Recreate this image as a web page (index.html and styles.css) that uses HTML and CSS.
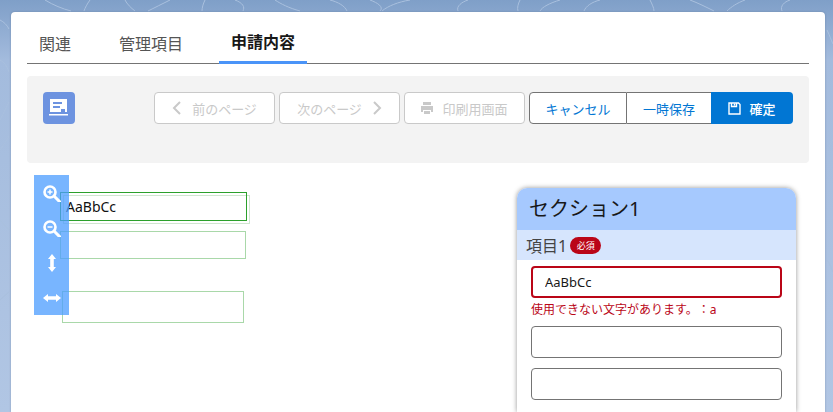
FILE: index.html
```html
<!DOCTYPE html>
<html lang="ja">
<head>
<meta charset="utf-8">
<title>申請内容</title>
<link rel="stylesheet" href="styles.css">
</head>
<body>
<svg class="backdrop" width="833" height="412" viewBox="0 0 833 412" fill="none" stroke="#a9c0de" stroke-width="1" aria-hidden="true">
  <path d="M45 0c8 5 18 9 26 11M90 0c-3 4-5 8-6 11M125 0c2 4 6 8 10 11M170 0c-8 4-16 8-22 11M205 0c-2 4-3 8-3 11M235 0c8 3 10 7 8 11M275 0c6 4 14 8 25 11M330 0c8 2 15 6 17 11M370 0c8 3 14 7 10 11M410 0c-12 2-22 6-28 11M468 0c-6 2-12 6-10 11M520 0c-2 4-3 8-2 11M560 0c-10 3-18 7-20 11M600 0c-8 2-14 6-16 11M650 0c2 4 4 8 4 11M690 0c8 3 16 7 24 11M745 0c-8 3-14 7-18 11M790 0c-6 2-10 6-8 11"/>
  <path d="M0 20c4 2 7 5 9 9M0 60c4 2 7 6 9 12M0 120c4-8 7-14 9-18M0 150c4-6 7-10 9-14M0 220c4 4 7 8 9 10M0 300c4-4 7-6 9-8M827 30c3 6 4 10 6 14M827 150c3-4 4-8 6-10M827 260c3 4 4 8 6 12"/>
</svg>
<main class="card">
  <nav class="tabs">
    <a class="tab">関連</a>
    <a class="tab">管理項目</a>
    <a class="tab tab-active">申請内容</a>
  </nav>
  <section class="actions">
    <span class="app-icon">
      <svg width="20" height="18" viewBox="0 0 20 18"><rect x="1" y="0" width="17" height="13" fill="#fff"/><rect x="4" y="3" width="9" height="2" fill="#6d93e0"/><rect x="4" y="7" width="7" height="2" fill="#6d93e0"/><rect x="12" y="10" width="4" height="3" fill="#6d93e0"/><rect x="0" y="15" width="19" height="1.5" fill="#fff"/></svg>
    </span>
    <div class="action-buttons">
      <button class="btn btn-disabled">
        <svg class="glyph" width="10" height="14" viewBox="0 0 10 14" fill="none" stroke="#c9c9c9" stroke-width="2"><path d="M8 1 2 7l6 6"/></svg>
        前のページ
      </button>
      <button class="btn btn-disabled">
        次のページ
        <svg class="glyph" width="10" height="14" viewBox="0 0 10 14" fill="none" stroke="#c9c9c9" stroke-width="2"><path d="m2 1 6 6-6 6"/></svg>
      </button>
      <button class="btn btn-disabled btn-print">
        <svg class="glyph" width="14" height="14" viewBox="0 0 14 14" fill="#c9c9c9"><rect x="3" y="1" width="8" height="3"/><path d="M1 5h12v6h-2V9H3v2H1z"/><rect x="4" y="10" width="6" height="3"/></svg>
        印刷用画面
      </button>
      <div class="btn-group">
        <button class="btn-seg btn-cancel">キャンセル</button>
        <button class="btn-seg btn-temp">一時保存</button>
        <button class="btn-seg btn-confirm">
          <svg width="13" height="13" viewBox="0 0 13 13" fill="none" stroke="#fff" stroke-width="1.4"><path d="M1 1h9.500L12 2.500V12H1z"/><path d="M3.500 1v3.500h5V1M6.500 1.500v2"/></svg>
          確定
        </button>
      </div>
    </div>
  </section>
  <div class="workspace">
    <div class="canvas">
      <div class="zoom-tools">
        <svg width="18" height="18" viewBox="0 0 18 18" fill="none" stroke="#fff"><circle cx="7" cy="8" r="5.500" stroke-width="2.600"/><path d="M11.500 12.500l5 5" stroke-width="3" stroke-linecap="round"/><path d="M4.500 8h5M7 5.500v5" stroke-width="1.500"/></svg>
        <svg width="18" height="18" viewBox="0 0 18 18" fill="none" stroke="#fff"><circle cx="7" cy="8" r="5.500" stroke-width="2.600"/><path d="M11.500 12.500l5 5" stroke-width="3" stroke-linecap="round"/><path d="M4.500 8h5" stroke-width="1.500"/></svg>
        <svg width="18" height="18" viewBox="0 0 18 18" fill="#fff"><path d="M9 0l4 5h-2.200v8H13l-4 5-4-5h2.200V5H5z"/></svg>
        <svg width="18" height="18" viewBox="0 0 18 18" fill="#fff"><path d="M0 9l5-4v2.200h8V5l5 4-5 4v-2.200H5V13z"/></svg>
      </div>
      <div class="field-box field-echo"></div>
      <div class="field-box field-main">AaBbCc</div>
      <div class="field-box field-second"></div>
      <div class="field-box field-third"></div>
    </div>
    <section class="form-section">
      <h2 class="section-title">セクション1</h2>
      <div class="item-label">項目1 <span class="required">必須</span></div>
      <div class="item-body">
        <input class="text-input text-input-error" value="AaBbCc">
        <p class="error-text">使用できない文字があります。：a</p>
        <input class="text-input">
        <input class="text-input">
      </div>
    </section>
  </div>
</main>
</body>
</html>
```
FILE: styles.css
```css
* { box-sizing: border-box; }
html, body { height: 412px; overflow: hidden; }
body {
  margin: 0;
  padding: 12px 8px 0 11px;
  background: linear-gradient(180deg, #7f9fc8 0, #a3bbdd 60px, #b1c6e4 412px);
  font-family: "Noto Sans", "Noto Sans CJK JP", sans-serif;
  color: #181818;
}
.backdrop { position: absolute; left: 0; top: 0; }
.card {
  position: relative;
  width: 814px;
  height: 400px;
  padding: 0 16px;
  background: #fff;
  border-radius: 4px 4px 0 0;
  box-shadow: 0 0 2px rgba(80, 100, 130, .5);
}
.tabs {
  display: flex;
  gap: 24px;
  height: 52px;
  border-bottom: 1px solid #747474;
}
.tab {
  display: flex;
  align-items: center;
  justify-content: center;
  height: 51px;
  padding: 10px 12px 0;
  font-size: 16px;
  color: #555;
}
.tab-active { font-weight: 700; color: #181818; padding-bottom: 2px; height: 52px; border-bottom: 3px solid #4a94f8; }
.actions {
  display: flex;
  justify-content: space-between;
  height: 87px;
  margin-top: 12px;
  padding: 16px 16px 0;
  background: #f3f3f3;
  border-radius: 4px;
}
.app-icon {
  display: flex;
  align-items: center;
  justify-content: center;
  width: 32px;
  height: 32px;
  background: #6d93e0;
  border-radius: 4px;
}
.action-buttons { display: flex; gap: 4px; height: 32px; }
.btn {
  display: flex;
  align-items: center;
  justify-content: center;
  gap: 10px;
  width: 121px;
  height: 32px;
  padding: 0;
  background: #fff;
  border: 1px solid #c9c9c9;
  border-radius: 4px;
  font: inherit;
  font-size: 13px;
  color: #c9c9c9;
}
.btn-print { gap: 8px; padding-right: 1px; }
.btn-group { display: flex; height: 32px; }
.btn-seg {
  display: flex;
  align-items: center;
  justify-content: center;
  gap: 8px;
  height: 32px;
  padding: 0;
  background: #fff;
  border: 1px solid #747474;
  font: inherit;
  font-size: 13px;
  color: #0176d3;
}
.btn-cancel { width: 98px; border-radius: 4px 0 0 4px; }
.btn-temp { width: 84px; border-left: 0; border-right: 0; }
.btn-confirm {
  width: 82px;
  border: 0;
  border-radius: 0 4px 4px 0;
  background: #0176d3;
  color: #fff;
  font-weight: 500;
}
.workspace {
  display: flex;
  justify-content: space-between;
  margin-top: 25px;
  padding-right: 13px;
}
.canvas { position: relative; flex: 1; }
.zoom-tools {
  position: absolute;
  left: 7px;
  top: -13px;
  z-index: 2;
  display: flex;
  flex-direction: column;
  align-items: center;
  gap: 17px;
  width: 35px;
  height: 140px;
  padding-top: 9px;
  background: rgba(77, 158, 255, .76);
}
.field-box { position: absolute; border: 1px solid #a9d8a9; }
.field-main {
  left: 33px;
  top: 4px;
  width: 187px;
  height: 29px;
  padding-left: 5px;
  border-color: #2ca02c;
  font-size: 14px;
  line-height: 27px;
  color: #111;
}
.field-echo { left: 36px; top: 7px; width: 187px; height: 29px; border-color: #cfe6cf; }
.field-second { left: 33px; top: 43px; width: 186px; height: 28px; }
.field-third { left: 35px; top: 103px; width: 182px; height: 32px; }
.form-section {
  width: 279px;
  height: 224px;
  background: #fff;
  border-radius: 10px 10px 0 0;
  box-shadow: 0 0 5px rgba(0, 0, 0, .42);
}
.section-title {
  height: 42px;
  margin: 0;
  padding-left: 12px;
  background: #a6c9fe;
  border-radius: 10px 10px 0 0;
  font-size: 20px;
  font-weight: 400;
  line-height: 42px;
}
.item-label {
  display: flex;
  align-items: center;
  gap: 3px;
  height: 30px;
  padding-left: 9px;
  background: #d6e5fd;
  font-size: 16px;
  color: #444;
}
.required {
  height: 17px;
  padding: 0 6.500px;
  background: #ba0517;
  border-radius: 9px;
  color: #fff;
  font-size: 9px;
  line-height: 17px;
}
.item-body { padding: 6px 14px 0; }
.text-input {
  display: block;
  width: 251px;
  height: 32px;
  margin: 0 0 10px;
  padding: 0 12px;
  background: #fff;
  border: 1px solid #747474;
  border-radius: 4px;
  font: inherit;
  font-size: 13px;
  color: #181818;
  outline: 0;
}
.text-input-error { margin-bottom: 0; border: 2px solid #ba0517; }
.error-text {
  height: 28px;
  margin: 0;
  font-size: 12px;
  line-height: 24px;
  color: #ba0517;
  text-spacing-trim: space-all;
}
```
